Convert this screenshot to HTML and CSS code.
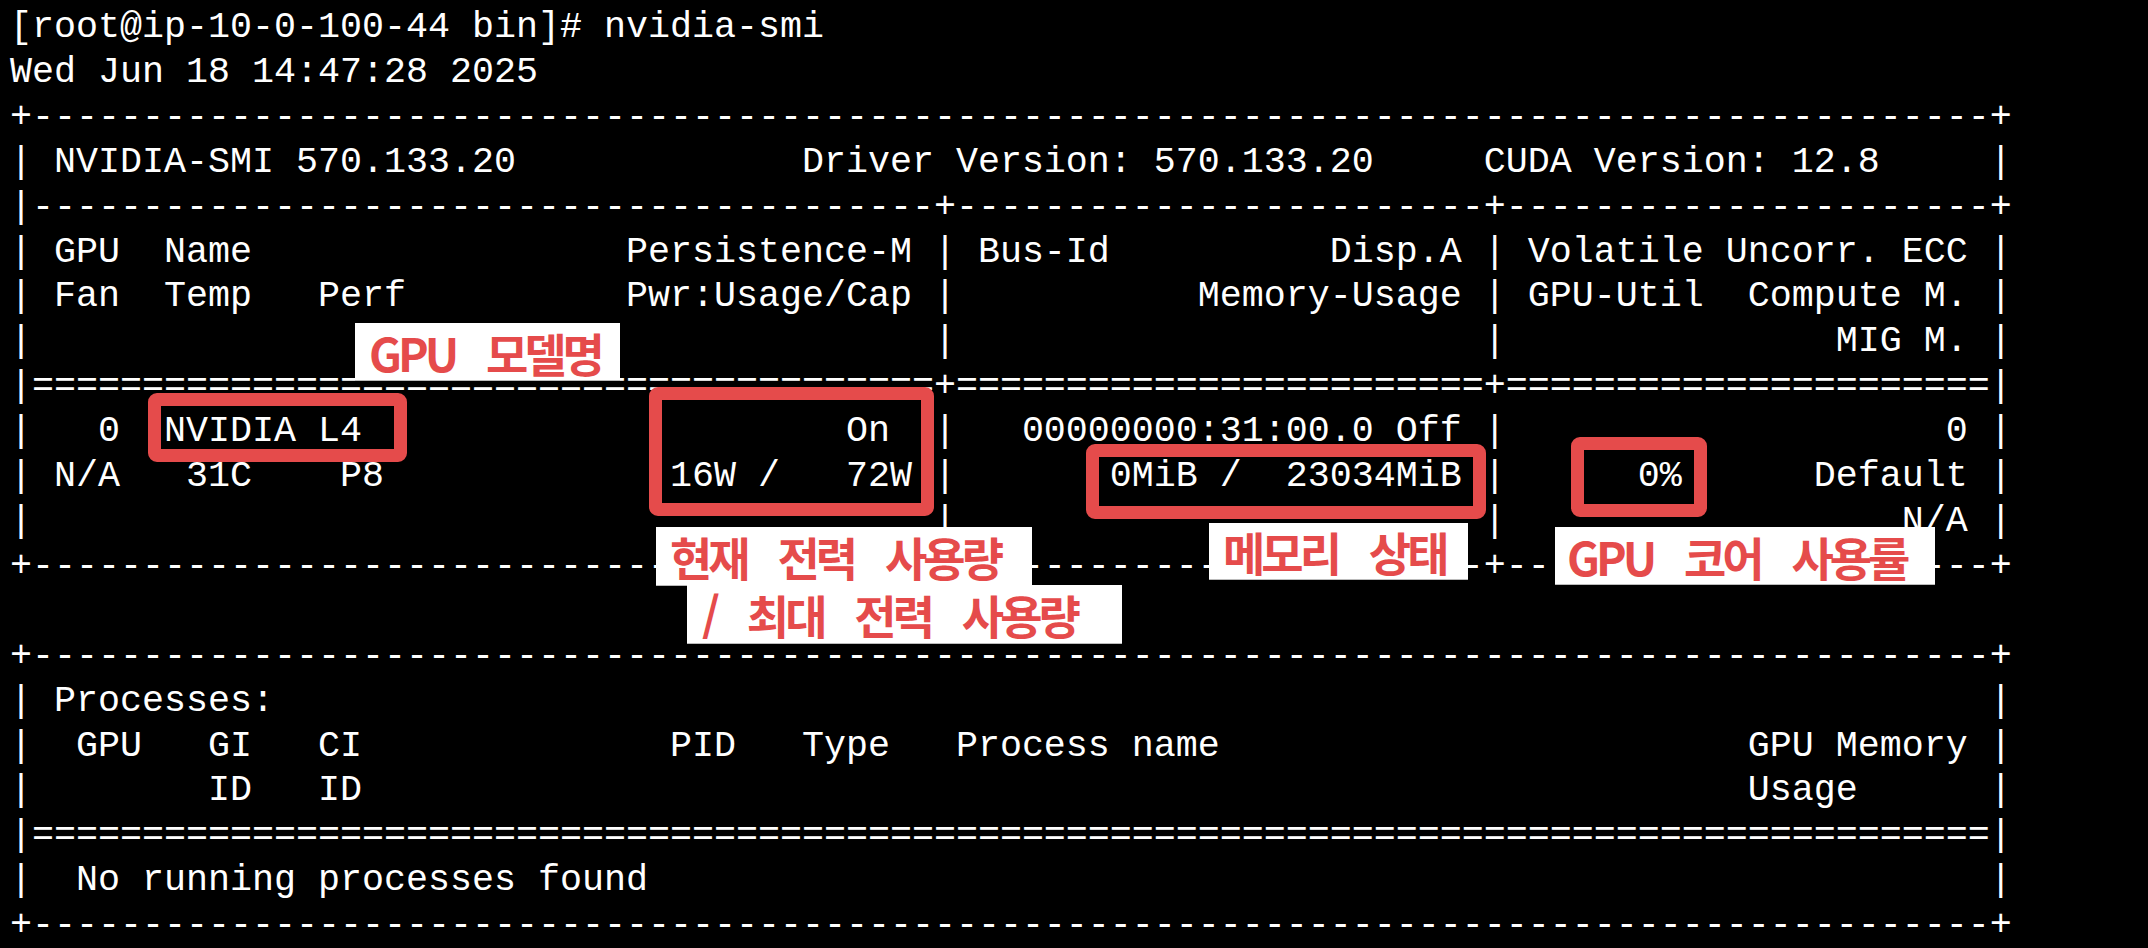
FILE: index.html
```html
<!DOCTYPE html>
<html lang="ko">
<head>
    <meta charset="UTF-8">
    <meta name="viewport" content="width=device-width, initial-scale=1.0">
    <title>nvidia-smi</title>
    <link rel="stylesheet" href="styles.css">
</head>
<body>

<div class="screen">
<pre class="term">[root@ip-10-0-100-44 bin]# nvidia-smi
Wed Jun 18 14:47:28 2025
+-----------------------------------------------------------------------------------------+
| NVIDIA-SMI 570.133.20             Driver Version: 570.133.20     CUDA Version: 12.8     |
|-----------------------------------------+------------------------+----------------------+
| GPU  Name                 Persistence-M | Bus-Id          Disp.A | Volatile Uncorr. ECC |
| Fan  Temp   Perf          Pwr:Usage/Cap |           Memory-Usage | GPU-Util  Compute M. |
|                                         |                        |               MIG M. |
|=========================================+========================+======================|
|   0  NVIDIA L4                      On  |   00000000:31:00.0 Off |                    0 |
| N/A   31C    P8             16W /   72W |       0MiB /  23034MiB |      0%      Default |
|                                         |                        |                  N/A |
+-----------------------------------------+------------------------+----------------------+

+-----------------------------------------------------------------------------------------+
| Processes:                                                                              |
|  GPU   GI   CI              PID   Type   Process name                        GPU Memory |
|        ID   ID                                                               Usage      |
|=========================================================================================|
|  No running processes found                                                             |
+-----------------------------------------------------------------------------------------+</pre>

    <!-- highlight boxes -->
    <div class="mark mark-model"></div>
    <div class="mark mark-power"></div>
    <div class="mark mark-memory"></div>
    <div class="mark mark-util"></div>

    <!-- labels -->
    <div class="tag tag-model">GPU 모델명</div>
    <div class="tag tag-power">현재 전력 사용량</div>
    <div class="tag tag-power-max">/ 최대 전력 사용량</div>
    <div class="tag tag-memory">메모리 상태</div>
    <div class="tag tag-util">GPU 코어 사용률</div>
</div>

</body>
</html>
```
FILE: styles.css
```css
body {
    margin: 0;
    background-color: #000;
}

.screen {
    position: relative;
    width: 2148px;
    height: 948px;
    overflow: hidden;
}

.term {
    margin: 0;
    padding: 5px 0 0 10px;
    font-family: 'Liberation Mono', monospace;
    font-size: 36.66px;
    line-height: 44.9px;
    color: #fff;
}

.mark {
    position: absolute;
    box-sizing: border-box;
    border: 13.5px solid #e54b4b;
    border-radius: 9px;
}

.mark-model {
    left: 148px;
    top: 393px;
    width: 259px;
    height: 69px;
}

.mark-power {
    left: 649px;
    top: 387px;
    width: 285px;
    height: 129px;
}

.mark-memory {
    left: 1086px;
    top: 444px;
    width: 400px;
    height: 75px;
}

.mark-util {
    left: 1571px;
    top: 437px;
    width: 136px;
    height: 80px;
}

.tag {
    position: absolute;
    box-sizing: border-box;
    display: flex;
    align-items: center;
    padding-left: 14px;
    background-color: #fff;
    box-shadow: 0 1px 0 #bbb;
    color: #e54b4b;
    font-family: 'Noto Sans CJK KR', sans-serif;
    font-weight: 700;
    font-size: 46px;
    letter-spacing: -4px;
    word-spacing: 22px;
    white-space: nowrap;
}

.tag-model {
    left: 355px;
    top: 323px;
    width: 265px;
    height: 57px;
}

.tag-power {
    left: 656px;
    top: 527px;
    width: 376px;
    height: 58px;
}

.tag-power-max {
    left: 687px;
    top: 585px;
    width: 435px;
    height: 58px;
    padding-left: 15px;
}

.tag-memory {
    left: 1209px;
    top: 523px;
    width: 259px;
    height: 56px;
}

.tag-util {
    left: 1555px;
    top: 527px;
    width: 380px;
    height: 57px;
    padding-left: 12px;
}
```
